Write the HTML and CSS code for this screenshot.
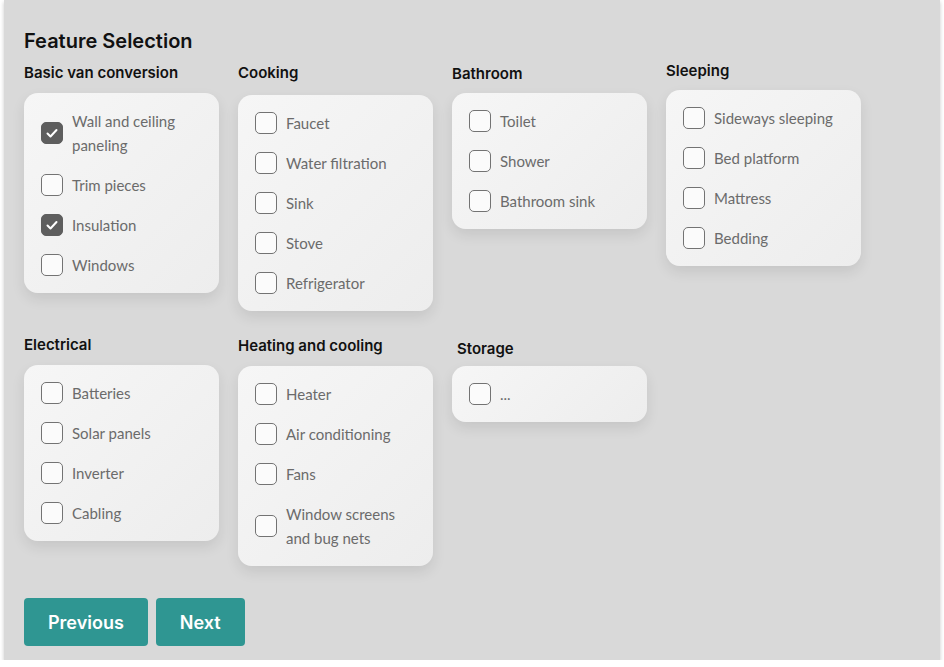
FILE: index.html
```html
<!DOCTYPE html>
<html lang="en">
<head>
<meta charset="utf-8">
<title>Feature Selection</title>
<link rel="stylesheet" href="styles.css">
</head>
<body>
<div class="panel">
  <h1 class="title">Feature Selection</h1>
  <div class="grid">
    <section class="group grp-basic">
      <h2 class="group-title">Basic van conversion</h2>
      <div class="card">
        <div class="item"><span class="box checked"><svg viewBox="0 0 22 22" width="22" height="22"><path d="M6.5 11.5l3 3 6-6.5" fill="none" stroke="#fff" stroke-width="2" stroke-linecap="round" stroke-linejoin="round"/></svg></span><span class="label">Wall and ceiling paneling</span></div>
        <div class="item"><span class="box"></span><span class="label">Trim pieces</span></div>
        <div class="item"><span class="box checked"><svg viewBox="0 0 22 22" width="22" height="22"><path d="M6.5 11.5l3 3 6-6.5" fill="none" stroke="#fff" stroke-width="2" stroke-linecap="round" stroke-linejoin="round"/></svg></span><span class="label">Insulation</span></div>
        <div class="item"><span class="box"></span><span class="label">Windows</span></div>
      </div>
    </section>
    <section class="group grp-cooking">
      <h2 class="group-title">Cooking</h2>
      <div class="card">
        <div class="item"><span class="box"></span><span class="label">Faucet</span></div>
        <div class="item"><span class="box"></span><span class="label">Water filtration</span></div>
        <div class="item"><span class="box"></span><span class="label">Sink</span></div>
        <div class="item"><span class="box"></span><span class="label">Stove</span></div>
        <div class="item"><span class="box"></span><span class="label">Refrigerator</span></div>
      </div>
    </section>
    <section class="group grp-bathroom">
      <h2 class="group-title">Bathroom</h2>
      <div class="card">
        <div class="item"><span class="box"></span><span class="label">Toilet</span></div>
        <div class="item"><span class="box"></span><span class="label">Shower</span></div>
        <div class="item"><span class="box"></span><span class="label">Bathroom sink</span></div>
      </div>
    </section>
    <section class="group grp-sleeping">
      <h2 class="group-title">Sleeping</h2>
      <div class="card">
        <div class="item"><span class="box"></span><span class="label">Sideways sleeping</span></div>
        <div class="item"><span class="box"></span><span class="label">Bed platform</span></div>
        <div class="item"><span class="box"></span><span class="label">Mattress</span></div>
        <div class="item"><span class="box"></span><span class="label">Bedding</span></div>
      </div>
    </section>
    <section class="group grp-electrical">
      <h2 class="group-title">Electrical</h2>
      <div class="card">
        <div class="item"><span class="box"></span><span class="label">Batteries</span></div>
        <div class="item"><span class="box"></span><span class="label">Solar panels</span></div>
        <div class="item"><span class="box"></span><span class="label">Inverter</span></div>
        <div class="item"><span class="box"></span><span class="label">Cabling</span></div>
      </div>
    </section>
    <section class="group grp-heating">
      <h2 class="group-title">Heating and cooling</h2>
      <div class="card">
        <div class="item"><span class="box"></span><span class="label">Heater</span></div>
        <div class="item"><span class="box"></span><span class="label">Air conditioning</span></div>
        <div class="item"><span class="box"></span><span class="label">Fans</span></div>
        <div class="item"><span class="box"></span><span class="label">Window screens and bug nets</span></div>
      </div>
    </section>
    <section class="group grp-storage">
      <h2 class="group-title">Storage</h2>
      <div class="card">
        <div class="item"><span class="box"></span><span class="label">...</span></div>
      </div>
    </section>
  </div>
  <div class="actions">
    <button class="btn">Previous</button>
    <button class="btn">Next</button>
  </div>
</div>
</body>
</html>
```
FILE: styles.css
```css
html, body {
  margin: 0;
  padding: 0;
  background: #ffffff;
}

.panel {
  box-sizing: border-box;
  width: 936px;
  height: 660px;
  margin-left: 4px;
  padding: 29px 20px 0 20px;
  background: #d9d9d9;
  box-shadow: 0 2px 4px rgba(0, 0, 0, 0.22);
  font-family: Inter, "Liberation Sans", sans-serif;
}

.title {
  margin: 0;
  font-size: 20px;
  line-height: 24px;
  font-weight: 600;
  color: #111111;
}

.grid {
  margin-top: 8px;
  display: grid;
  grid-template-columns: repeat(4, 195px);
  column-gap: 19px;
  row-gap: 24px;
  align-items: start;
}

.group-title {
  margin: 0 0 10px 0;
  font-size: 15px;
  line-height: 20px;
  font-weight: 600;
  color: #111111;
}

.grp-basic { padding-top: 2px; }
.grp-cooking { padding-top: 2px; }
.grp-cooking .group-title { margin-bottom: 12px; }
.grp-bathroom { padding-top: 3px; }
.grp-bathroom .group-title { margin-bottom: 9px; }
.grp-sleeping { padding-top: 0; }
.grp-sleeping .group-title { margin-bottom: 9px; }
.grp-electrical { padding-top: 0; }
.grp-heating { padding-top: 1px; }
.grp-storage { padding-top: 4px; }
.grp-storage .group-title { margin-bottom: 7px; padding-left: 5px; }

.card {
  display: flex;
  flex-direction: column;
  gap: 16px;
  padding: 16px 16px 16px 17px;
  border-radius: 14px;
  background: linear-gradient(135deg, #f6f6f6 0%, #ededed 100%);
  box-shadow: 0 6px 14px rgba(0, 0, 0, 0.09);
}

.item {
  display: flex;
  align-items: center;
  gap: 9px;
}

.box {
  flex: none;
  box-sizing: border-box;
  width: 22px;
  height: 22px;
  border: 1.5px solid #737373;
  border-radius: 5px;
  background: #fbfbfb;
  display: flex;
  align-items: center;
  justify-content: center;
}

.box svg {
  display: block;
  flex: none;
}

.box.checked {
  background: #5e5e5e;
  border-color: #5e5e5e;
}

.label {
  font-family: Lato, "Open Sans", sans-serif;
  font-size: 15px;
  line-height: 24px;
  color: #6b6b6b;
}

.actions {
  margin-top: 32px;
  display: flex;
  gap: 8px;
}

.btn {
  height: 48px;
  padding: 0 24px;
  border: none;
  border-radius: 4px;
  background: #2f9692;
  color: #ffffff;
  font-family: Inter, "Liberation Sans", sans-serif;
  font-size: 18px;
  font-weight: 600;
  cursor: pointer;
}
```
